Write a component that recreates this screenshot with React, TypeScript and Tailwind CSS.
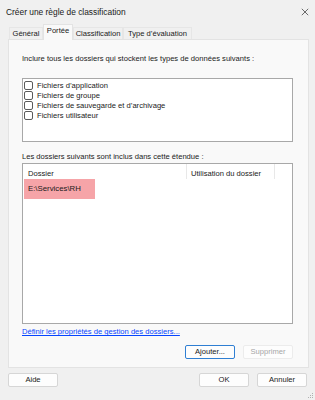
import React from "react";

const font = { fontFamily: '"Liberation Sans", Arial, sans-serif' };

function Check({ label }: { label: string }) {
  return (
    <div className="flex items-center h-[10px] gap-[4px]">
      <div className="w-[9px] h-[9px] border border-[#5a5a5a] rounded-[2px] bg-white shrink-0" />
      <span className="leading-none">{label}</span>
    </div>
  );
}

function Btn({ children, className = "" }: { children: React.ReactNode; className?: string }) {
  return (
    <div
      className={`h-[14px] w-[50px] flex items-center justify-center rounded-[2px] border bg-[#fdfdfd] leading-none ${className}`}
    >
      {children}
    </div>
  );
}

const tabs = [
  { label: "Général", w: "w-[34px]" },
  { label: "Portée", w: "w-[30px]" },
  { label: "Classification", w: "w-[50px]" },
  { label: "Type d’évaluation", w: "w-[69px]" },
];

export default function App() {
  return (
    <div className="w-[315px] h-[400px] bg-[#f0f0f0] text-[#1a1a1a] text-[7.6px] relative overflow-hidden" style={font}>
      <div className="h-[24px] flex items-center justify-between pl-[6px] pr-[6px] text-[8.4px]">
        <span>Créer une règle de classification</span>
        <svg viewBox="0 0 10 10" className="w-[8px] h-[8px]" stroke="#333" strokeWidth="0.9" fill="none">
          <path d="M1 1l8 8M9 1l-8 8" />
        </svg>
      </div>

      <div className="flex items-end h-[15px] pl-[9px]">
        {tabs.map((t) => {
          const active = t.label === "Portée";
          return (
            <div
              key={t.label}
              className={
                active
                  ? `${t.w} h-[16px] -mb-px z-10 pt-[2px] bg-[#f9f9f9] border border-b-0 border-[#e3e3e3] flex justify-center items-start`
                  : `${t.w} h-[12px] border border-b-0 border-[#e6e6e6] flex justify-center items-center`
              }
            >
              <span className="leading-none">{t.label}</span>
            </div>
          );
        })}
      </div>

      <div className="mx-[8px] w-[301px] h-[329px] bg-[#f9f9f9] border border-[#e3e3e3] pl-[13px] flex flex-col">
        <div className="mt-[15px] leading-none">
          Inclure tous les dossiers qui stockent les types de données suivants :
        </div>
        <div className="mt-[15px] w-[271px] h-[64px] bg-white border border-[#a8a8a8] pl-[1px] pt-[2px]">
          <Check label="Fichiers d’application" />
          <Check label="Fichiers de groupe" />
          <Check label="Fichiers de sauvegarde et d’archivage" />
          <Check label="Fichiers utilisateur" />
        </div>
        <div className="mt-[11px] leading-none">Les dossiers suivants sont inclus dans cette étendue :</div>
        <div className="mt-[3px] w-[271px] h-[161px] bg-white border border-[#a8a8a8] pl-[1px]">
          <div className="flex h-[15px] items-center">
            <div className="w-[163px] h-full flex items-center pl-[4px] pt-[4px] border-r border-[#e8e8e8]">Dossier</div>
            <div className="w-[88px] h-full flex items-center pl-[4px] pt-[4px] border-r border-[#e8e8e8]">
              Utilisation du dossier
            </div>
          </div>
          <div className="w-[71px] h-[20px] bg-[#f6a4a8] flex items-center pl-[4px] text-[7.8px]">E:\Services\RH</div>
        </div>
        <div className="mt-[4px] text-[#0645ff] underline leading-none">Définir les propriétés de gestion des dossiers...</div>
        <div className="mt-[9px] flex justify-end gap-[8px] w-[271px]">
          <Btn className="border-[#2f7fd3] border-[1.5px]">Ajouter...</Btn>
          <Btn className="border-[#ececec] bg-[#f5f5f5] text-[#a6a6a6]">Supprimer</Btn>
        </div>
      </div>

      <div className="flex items-center mt-[5px] px-[8px]">
        <Btn className="border-[#d6d6d6]">Aide</Btn>
        <div className="flex-1" />
        <div className="flex gap-[8px]">
          <Btn className="border-[#d6d6d6]">OK</Btn>
          <Btn className="border-[#d6d6d6]">Annuler</Btn>
        </div>
      </div>

      <svg viewBox="0 0 6 6" className="absolute right-[1px] bottom-[1px] w-[6px] h-[6px]" fill="#b0b0b0">
        <rect x="4" y="0" width="1" height="1" />
        <rect x="2" y="2" width="1" height="1" />
        <rect x="4" y="2" width="1" height="1" />
        <rect x="0" y="4" width="1" height="1" />
        <rect x="2" y="4" width="1" height="1" />
        <rect x="4" y="4" width="1" height="1" />
      </svg>
    </div>
  );
}
